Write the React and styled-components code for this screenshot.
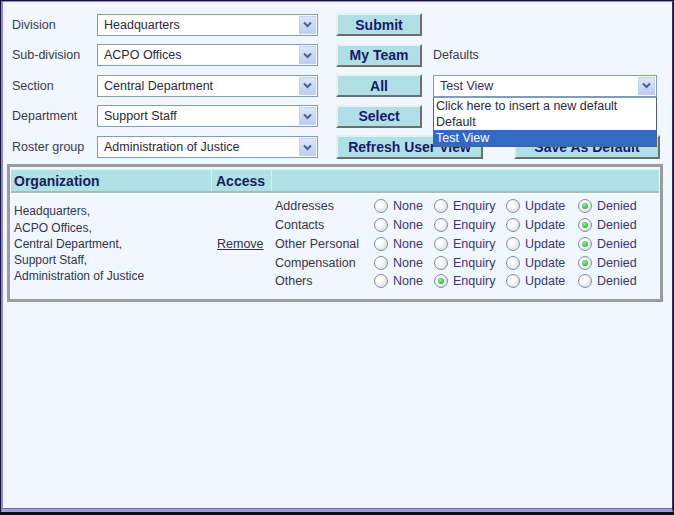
import React from "react";
import styled, { createGlobalStyle } from "styled-components";

const GlobalStyle = createGlobalStyle`
  html, body { margin: 0; padding: 0; }
  body {
    font-family: "Liberation Sans", Arial, sans-serif;
    background: #ffffff;
  }
`;

const Frame = styled.div`
  width: 674px;
  height: 515px;
  box-sizing: border-box;
  border: 1px solid #14143c;
  border-bottom: 3px solid #0c0c1c;
  display: flex;
  flex-direction: column;
`;

const Inner = styled.div`
  flex: 1;
  display: flex;
  flex-direction: column;
  border-left: 2px solid #8a8ac4;
  border-top: 1px solid #8a8ac4;
  border-right: 1px solid #30305a;
  border-bottom: 3px solid #a0a0d6;
`;

const Content = styled.div`
  flex: 1;
  background: #f0f7fe;
  border-bottom: 1px solid #6a6aa0;
`;

const Form = styled.div`
  display: flex;
  flex-direction: column;
  gap: 7.5px;
  padding: 11px 0 0 9px;
`;

const Row = styled.div`
  display: flex;
  align-items: center;
  height: ${p => p.tall ? 24 : 23}px;
`;

const Label = styled.div`
  width: 85px;
  font-size: 12.5px;
  color: #3a3a4a;
`;

const SelectBox = styled.div`
  width: ${p => p.w}px;
  height: 22px;
  box-sizing: border-box;
  border: 1px solid #7f9db9;
  background: #ffffff;
  display: flex;
  align-items: center;
  padding-left: 6px;
  font-size: 12.5px;
  color: ${p => p.dark ? "#3a2a5a" : "#2a2a3a"};
`;

const SelectText = styled.span`
  flex: 1;
  white-space: nowrap;
  overflow: hidden;
`;

const ArrowBox = styled.div`
  width: 17px;
  height: 18px;
  margin-right: 1px;
  box-sizing: border-box;
  border: 1px solid #c2d2f0;
  background: linear-gradient(#dde7fb, #bccdf3);
  display: flex;
  align-items: center;
  justify-content: center;
`;

const Button = styled.div`
  width: ${p => p.w}px;
  height: ${p => p.h || 23}px;
  margin-left: ${p => p.ml}px;
  box-sizing: border-box;
  background: #b0e0e6;
  border: 2px solid;
  border-color: #e6f2f2 #6e6e6e #6e6e6e #e6f2f2;
  display: flex;
  align-items: center;
  justify-content: center;
  font-size: 14px;
  font-weight: bold;
  color: #17186e;
  white-space: nowrap;
`;

const Side = styled.div`
  margin-left: 11px;
  font-size: 12.5px;
  color: #3a3a4a;
`;

const ComboWrap = styled.div`
  position: relative;
  margin-left: 11px;
`;

const DropList = styled.div`
  position: absolute;
  top: 22px;
  left: 0;
  width: 224px;
  box-sizing: border-box;
  border: 1px solid #55607a;
  border-top: 1px solid #7f9db9;
  background: #ffffff;
  z-index: 2;
`;

const DropItem = styled.div`
  height: 16px;
  line-height: 16px;
  padding-left: 2px;
  font-size: 12.5px;
  color: ${p => p.active ? "#ffffff" : "#2a2a3a"};
  background: ${p => p.active ? "#316ac5" : "transparent"};
  white-space: nowrap;
`;

const TableBox = styled.div`
  margin: 5px 0 0 4px;
  width: 656px;
  box-sizing: border-box;
  border: 3px solid #9b9b9b;
  padding: 2px 1px 1px;
  background: #f0f7fe;
`;

const Grid = styled.div`
  display: grid;
  grid-template-columns: 201px 60px 1fr;
`;

const Head = styled(Grid)`
  height: 24px;
  background: #b0e2e5;
  border-top: 1px solid #dff3f3;
  border-bottom: 2px solid #a6baba;
  box-sizing: border-box;
`;

const HeadCell = styled.div`
  display: flex;
  align-items: center;
  padding-left: ${p => p.pl}px;
  border-right: ${p => p.last ? "none" : "1px solid #d6efef"};
  font-size: 14px;
  font-weight: bold;
  color: #16205a;
`;

const Body = styled(Grid)`
  padding: 3px 0 7px;
  border-top: 1px solid #ffffff;
`;

const OrgCell = styled.div`
  align-self: center;
  padding-left: 3px;
  font-size: 12px;
  line-height: 16.25px;
  color: #30344a;
`;

const RemoveCell = styled.div`
  align-self: center;
  padding-left: 5px;
  font-size: 12.5px;
  color: #30344a;
  text-decoration: underline;
`;

const AccessCell = styled.div`
  padding-left: 3px;
`;

const AccessRow = styled.div`
  display: flex;
  align-items: center;
  height: 18.75px;
`;

const AccessLabel = styled.div`
  width: 99px;
  font-size: 12.5px;
  color: #363648;
  white-space: nowrap;
`;

const Option = styled.div`
  width: ${p => p.w ? `${p.w}px` : "auto"};
  display: flex;
  align-items: center;
  font-size: 12.5px;
  color: #3a3670;
`;

const RadioDot = styled.span`
  width: 14px;
  height: 14px;
  box-sizing: border-box;
  border-radius: 50%;
  border: 1px solid #7d8ea2;
  background: radial-gradient(circle at 35% 35%, #ffffff 20%, #d6dbe3 90%);
  margin-right: 5px;
  display: flex;
  align-items: center;
  justify-content: center;
  &::after {
    content: "";
    display: ${p => p.on ? "block" : "none"};
    width: 6px;
    height: 6px;
    border-radius: 50%;
    background: radial-gradient(circle at 40% 35%, #8cf08c, #1e9a1e);
  }
`;

const Chevron = () => (
  <svg width="9" height="7" viewBox="0 0 9 7">
    <path d="M1 1.5 L4.5 5 L8 1.5" fill="none" stroke="#4a5f8c" strokeWidth="2" />
  </svg>
);

const Select = ({ w, value, dark }) => (
  <SelectBox w={w} dark={dark}>
    <SelectText>{value}</SelectText>
    <ArrowBox><Chevron /></ArrowBox>
  </SelectBox>
);

const levels = [
  { label: "Division", value: "Headquarters", button: "Submit" },
  { label: "Sub-division", value: "ACPO Offices", button: "My Team" },
  { label: "Section", value: "Central Department", button: "All" },
  { label: "Department", value: "Support Staff", button: "Select" },
];

const access = [
  { label: "Addresses", value: "Denied" },
  { label: "Contacts", value: "Denied" },
  { label: "Other Personal", value: "Denied" },
  { label: "Compensation", value: "Denied" },
  { label: "Others", value: "Enquiry" },
];

const options = [
  { name: "None", w: 60 },
  { name: "Enquiry", w: 72 },
  { name: "Update", w: 72 },
  { name: "Denied" },
];

export default function App() {
  return (
    <>
      <GlobalStyle />
      <Frame>
        <Inner>
          <Content>
            <Form>
              {levels.map((l, i) => (
                <Row key={l.label}>
                  <Label>{l.label}</Label>
                  <Select w={221} value={l.value} />
                  <Button w={86} ml={18}>{l.button}</Button>
                  {i === 1 && <Side>Defaults</Side>}
                  {i === 2 && (
                    <ComboWrap>
                      <Select w={224} value="Test View" dark />
                      <DropList>
                        <DropItem>Click here to insert a new default</DropItem>
                        <DropItem>Default</DropItem>
                        <DropItem active>Test View</DropItem>
                      </DropList>
                    </ComboWrap>
                  )}
                </Row>
              ))}
              <Row tall>
                <Label>Roster group</Label>
                <Select w={221} value="Administration of Justice" />
                <Button w={147} h={24} ml={18}>Refresh User View</Button>
                <Button w={146} h={24} ml={31}>Save As Default</Button>
              </Row>
            </Form>

            <TableBox>
              <Head>
                <HeadCell pl={3}>Organization</HeadCell>
                <HeadCell pl={4}>Access</HeadCell>
                <HeadCell last />
              </Head>
              <Body>
                <OrgCell>
                  Headquarters,<br />
                  ACPO Offices,<br />
                  Central Department,<br />
                  Support Staff,<br />
                  Administration of Justice
                </OrgCell>
                <RemoveCell>Remove</RemoveCell>
                <AccessCell>
                  {access.map(a => (
                    <AccessRow key={a.label}>
                      <AccessLabel>{a.label}</AccessLabel>
                      {options.map(o => (
                        <Option key={o.name} w={o.w}>
                          <RadioDot on={a.value === o.name} />
                          {o.name}
                        </Option>
                      ))}
                    </AccessRow>
                  ))}
                </AccessCell>
              </Body>
            </TableBox>
          </Content>
        </Inner>
      </Frame>
    </>
  );
}
